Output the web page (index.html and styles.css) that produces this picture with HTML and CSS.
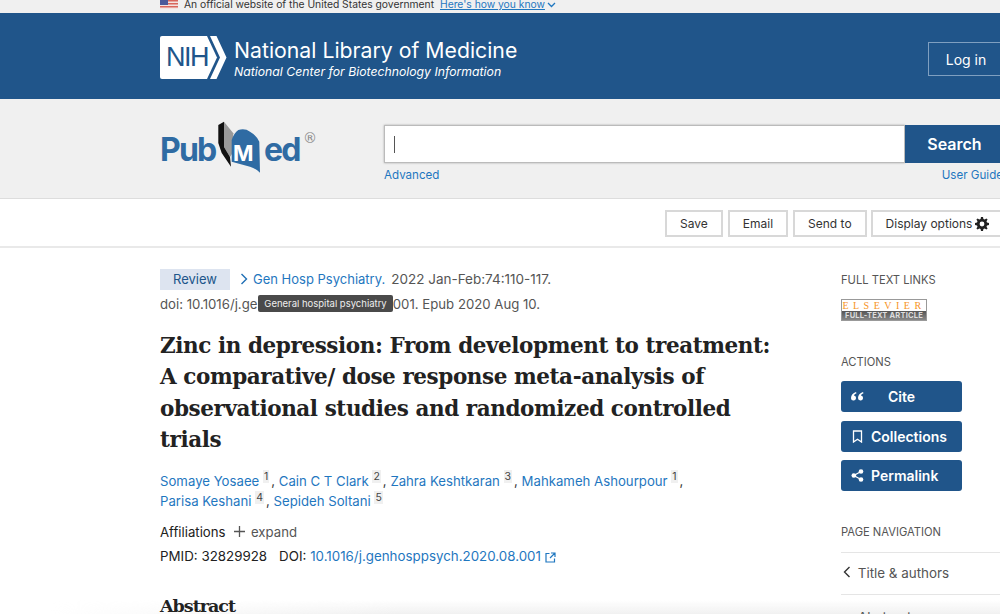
FILE: index.html
```html
<!DOCTYPE html>
<html lang="en">
<head>
    <meta charset="UTF-8">
    <title>Zinc in depression - PubMed</title>
    <link rel="stylesheet" href="styles.css">
</head>
<body>

<!-- Government banner -->
<div class="gov-banner">
    <svg class="flag" width="18" height="9" viewBox="0 0 18 9">
        <rect width="18" height="9" fill="#f3e3e0"/>
        <rect y="0" width="18" height="1.5" fill="#d8665c"/>
        <rect y="3" width="18" height="1.5" fill="#d8665c"/>
        <rect y="6" width="18" height="1.5" fill="#d8665c"/>
        <rect width="8" height="5" fill="#4a5a9a"/>
    </svg>
    <span>An official website of the United States government</span>
    <a href="#" class="how-link">Here's how you know</a>
    <svg class="how-arrow" width="9" height="6" viewBox="0 0 9 6"><path d="M1 1l3.5 3.5L8 1" fill="none" stroke="#1f77c0" stroke-width="1.3"/></svg>
</div>

<!-- NCBI header -->
<header class="ncbi-header">
    <div class="nih-logo">
        <svg width="67" height="43" viewBox="0 0 67 43">
            <path d="M2 0H47L57 21.5L47 43H2Q0 43 0 41V2Q0 0 2 0Z" fill="#fff"/>
            <path d="M50 0h6.5L66.5 21.5L56.5 43H50L60 21.5Z" fill="#fff"/>
        </svg>
        <span class="nih-mark">NIH</span>
    </div>
    <div class="nlm-text">
        <div class="nlm-name">National Library of Medicine</div>
        <div class="nlm-sub">National Center for Biotechnology Information</div>
    </div>
    <a href="#" class="login">Log in</a>
</header>

<!-- Search -->
<section class="search-bar">
    <div class="pubmed-logo">
        <span class="pub">Pub</span>
        <svg class="book" width="44" height="53" viewBox="0 0 44 53">
            <path d="M7 .7L16.3 12.3L15.7 32L13 36L7 26Z" fill="#9a9a9a"/>
            <path d="M1.3 4L7 .7V26L13 36L14 45.7L4.7 32L1.3 22Z" fill="#111"/>
            <path d="M14.7 19Q17 12 21.3 9Q28 7 33 10.7Q39 14 42.3 20.7L43 51.7Q39 47.5 33 45.7L14.7 40.7Z" fill="#2f6ba3"/>
        </svg>
        <span class="med-m">M</span>
        <span class="ed">ed</span>
        <span class="reg">®</span>
    </div>
    <div class="search-form">
        <div class="search-row">
            <div class="search-input"><span class="caret"></span></div>
            <button class="search-btn">Search</button>
        </div>
        <div class="search-links">
            <a href="#">Advanced</a>
            <a href="#">User Guide</a>
        </div>
    </div>
</section>

<!-- Toolbar -->
<nav class="toolbar">
    <button class="tool-btn">Save</button>
    <button class="tool-btn">Email</button>
    <button class="tool-btn">Send to</button>
    <button class="tool-btn display-btn">Display options
        <svg width="14" height="14" viewBox="0 0 14 14"><path d="M6 0h2l.4 2 1.3.5L11.4 1.4l1.2 1.2-1.1 1.7.5 1.3 2 .4v2l-2 .4-.5 1.3 1.1 1.7-1.2 1.2-1.7-1.1-1.3.5L8 14H6l-.4-2-1.3-.5-1.7 1.1-1.2-1.2 1.1-1.7-.5-1.3-2-.4V6l2-.4.5-1.3-1.100-1.700 1.200-1.200 1.700 1.100 1.300-.5ZM7 4.600a2.400 2.400 0 1 0 0 4.800 2.400 2.400 0 0 0 0-4.800Z" fill="#222" fill-rule="evenodd"/></svg>
    </button>
</nav>

<div class="page">
    <main class="article">
        <div class="cit-row">
            <span class="review">Review</span>
            <svg class="chevron" width="8" height="12" viewBox="0 0 8 12"><path d="M1.5 1l5 5-5 5" fill="none" stroke="#1f6fb5" stroke-width="1.4"/></svg>
            <a href="#">Gen Hosp Psychiatry.</a>
            <span>2022 Jan-Feb:74:110-117.</span>
        </div>
        <div class="doi-row">
            doi: 10.1016/j.genhosppsych.2020.08.001. Epub 2020 Aug 10.
            <span class="tooltip">General hospital psychiatry</span>
        </div>

        <h1>Zinc in depression: From development to treatment: A comparative/ dose response meta-analysis of observational studies and randomized controlled trials</h1>

        <div class="authors">
            <a href="#">Somaye Yosaee</a> <sup>1</sup>, <a href="#">Cain C T Clark</a> <sup>2</sup>, <a href="#">Zahra Keshtkaran</a> <sup>3</sup>, <a href="#">Mahkameh Ashourpour</a> <sup>1</sup>,<br>
            <a href="#">Parisa Keshani</a> <sup>4</sup>, <a href="#">Sepideh Soltani</a> <sup>5</sup>
        </div>

        <div class="affil">Affiliations
            <svg width="11" height="11" viewBox="0 0 11 11"><path d="M5.5 0v11M0 5.5h11" stroke="#555" stroke-width="1.3"/></svg>
            <span class="expand">expand</span>
        </div>
        <div class="ids">
            <span>PMID: 32829928</span>
            <span>DOI: <a href="#">10.1016/j.genhosppsych.2020.08.001</a>
                <svg class="ext-icon" width="11" height="11" viewBox="0 0 11 11"><path d="M4.5 1.5H1v8.500h8.500V6.500M6 1h4v4M10 1L5 6" fill="none" stroke="#1f77c0" stroke-width="1.2"/></svg>
            </span>
        </div>

        <h2>Abstract</h2>
    </main>

    <aside class="sidebar">
        <h3 class="side-title">FULL TEXT LINKS</h3>
        <div class="elsevier">
            <div class="els-top">ELSEVIER</div>
            <div class="els-bottom">FULL-TEXT ARTICLE</div>
        </div>

        <h3 class="side-title actions-title">ACTIONS</h3>
        <button class="action-btn">
            <svg class="act-icon" width="13" height="9" viewBox="0 0 13 9"><path d="M5 0C2 1 0 3 0 6a2.5 2.5 0 1 0 3-2.400C3.300 2.500 4 2 5.500 1.300ZM12 0C9 1 7 3 7 6a2.500 2.500 0 1 0 3-2.400c.3-1.100 1-1.600 2.500-2.300Z" fill="#fff"/></svg>
            <span class="cite-label">Cite</span>
        </button>
        <button class="action-btn">
            <svg class="act-icon" width="13" height="13" viewBox="0 0 13 13"><path d="M2.5 1h8v11l-4-2.800-4 2.800Z" fill="none" stroke="#fff" stroke-width="1.3"/></svg>
            Collections
        </button>
        <button class="action-btn">
            <svg class="act-icon" width="13" height="13" viewBox="0 0 13 13"><circle cx="2.8" cy="6.5" r="2.3" fill="#fff"/><circle cx="10" cy="2.5" r="2.3" fill="#fff"/><circle cx="10" cy="10.5" r="2.3" fill="#fff"/><path d="M2.8 6.5L10 2.5M2.8 6.5L10 10.5" stroke="#fff" stroke-width="1.3"/></svg>
            Permalink
        </button>

        <h3 class="side-title nav-title">PAGE NAVIGATION</h3>
        <div class="nav-item">
            <svg width="8" height="12" viewBox="0 0 8 12"><path d="M6.5 1l-5 5 5 5" fill="none" stroke="#333" stroke-width="1.4"/></svg>
            Title &amp; authors
        </div>
        <div class="nav-item plain">Abstract</div>
    </aside>
</div>

<div class="bottom-fade"></div>

</body>
</html>
```

FILE: styles.css
```css
html, body {
    height: 614px;
    overflow: hidden;
}
body {
    margin: 0;
    padding: 0;
    background-color: #fff;
    font-family: Inter, "Liberation Sans", sans-serif;
    color: #212121;
    font-size: 13.2px;
}
a {
    color: #1f77c0;
    text-decoration: none;
}
button {
    font-family: inherit;
}

/* Government banner */
.gov-banner {
    height: 13px;
    overflow: hidden;
    background-color: #f0f0f0;
    display: flex;
    align-items: flex-end;
    gap: 6px;
    padding-left: 160px;
    font-size: 10.3px;
    line-height: 18px;
    color: #333;
}
.flag {
    margin-bottom: 4px;
}
.how-link {
    text-decoration: underline;
}
.how-arrow {
    margin: 0 0 5px -4px;
}

/* NCBI header */
.ncbi-header {
    height: 86px;
    background-color: #20558a;
    display: flex;
    align-items: center;
    padding-left: 160px;
    color: #fff;
    overflow: hidden;
}
.nih-logo {
    position: relative;
    width: 66px;
    height: 43px;
    margin-top: 2px;
}
.nih-logo svg {
    display: block;
}
.nih-mark {
    position: absolute;
    top: 8px;
    left: 6px;
    font-family: "Liberation Sans", sans-serif;
    font-size: 27px;
    line-height: 27px;
    letter-spacing: -1.5px;
    color: #20558a;
}
.nlm-text {
    margin: 3px 0 0 8px;
}
.nlm-name {
    font-size: 21.25px;
    line-height: 27px;
    font-weight: 400;
}
.nlm-sub {
    font-size: 12.25px;
    line-height: 15px;
    font-style: italic;
}
.login {
    margin-left: auto;
    margin-right: -4px;
    margin-top: 6px;
    width: 74px;
    height: 32px;
    line-height: 34px;
    text-align: center;
    border: 1px solid #7f9fc0;
    color: #fff;
    font-size: 14px;
}

/* Search */
.search-bar {
    height: 100px;
    box-sizing: border-box;
    background-color: #f0f0f0;
    border-bottom: 1px solid #ddd;
    display: flex;
    padding-left: 160px;
}
.pubmed-logo {
    position: relative;
    width: 224px;
    flex-shrink: 0;
    color: #2f6ba3;
    font-weight: 700;
    font-size: 32px;
    letter-spacing: -1.8px;
}
.pub {
    position: absolute;
    left: 0;
    top: 32px;
    line-height: 38px;
}
.book {
    position: absolute;
    left: 57px;
    top: 22px;
}
.med-m {
    position: absolute;
    left: 73px;
    top: 41px;
    font-size: 22px;
    line-height: 26px;
    letter-spacing: 0;
    color: #fff;
}
.ed {
    position: absolute;
    left: 104px;
    top: 32px;
    line-height: 38px;
}
.reg {
    position: absolute;
    left: 143px;
    top: 30px;
    font-family: "DejaVu Sans", sans-serif;
    font-size: 14px;
    line-height: 18px;
    font-weight: 400;
    letter-spacing: 0;
    color: #8a8a8a;
}
.search-form {
    padding-top: 26px;
    flex-shrink: 0;
}
.search-row {
    display: flex;
    height: 38px;
}
.search-input {
    width: 521px;
    flex-shrink: 0;
    box-sizing: border-box;
    background: #fff;
    border: 1px solid #bbb;
    box-shadow: 0 0 2px rgba(0, 0, 0, 0.3);
    padding: 10px 9px;
}
.caret {
    display: block;
    width: 1px;
    height: 17px;
    background: #555;
}
.search-btn {
    width: 99px;
    flex-shrink: 0;
    border: none;
    background-color: #20558a;
    color: #fff;
    font-size: 16px;
    font-weight: 600;
    padding: 0 0 1px;
}
.search-links {
    display: flex;
    justify-content: space-between;
    width: 619px;
    font-size: 11.6px;
    line-height: 16px;
    margin-top: 4px;
}

/* Toolbar */
.toolbar {
    height: 49px;
    box-sizing: border-box;
    border-bottom: 2px solid #e9e9e9;
    display: flex;
    align-items: center;
    gap: 5px;
    padding: 2px 0 0 665px;
}
.tool-btn {
    height: 27px;
    padding: 0 13px;
    background: #fff;
    border: 2px solid #d8d8d8;
    color: #333;
    font-size: 12px;
    flex-shrink: 0;
}
.display-btn {
    display: flex;
    align-items: center;
    gap: 3px;
    margin-left: -1px;
    padding: 0 14px 0 13px;
}

/* Main layout */
.page {
    display: flex;
    padding-left: 160px;
    position: relative;
    z-index: 1;
}
.article {
    width: 620px;
    padding-top: 20px;
    flex-shrink: 0;
}
.cit-row {
    display: flex;
    align-items: center;
    height: 22px;
    color: #555;
    font-size: 13.5px;
}
.review {
    width: 70px;
    height: 21px;
    line-height: 21px;
    text-align: center;
    background-color: #dde4f0;
    color: #20558a;
    font-size: 13px;
    margin-right: 10px;
}
.chevron {
    margin-right: 5px;
}
.cit-row a {
    font-size: 13px;
    margin-right: 6px;
}
.doi-row {
    position: relative;
    margin-top: 3px;
    line-height: 22px;
    color: #555;
}
.tooltip {
    position: absolute;
    left: 98px;
    top: 2px;
    height: 17px;
    line-height: 17px;
    width: 135px;
    text-align: center;
    background: #4a4a4a;
    color: #eee;
    font-size: 9.5px;
    border-radius: 2px;
}
h1 {
    margin: 15px 0 0;
    font-family: "DejaVu Serif", serif;
    font-size: 21.5px;
    line-height: 31.4px;
    font-weight: 700;
    letter-spacing: -0.42px;
    color: #222;
}
.authors {
    margin-top: 15px;
    line-height: 20.5px;
    color: #333;
}
.authors sup {
    font-size: 10.5px;
    color: #444;
    line-height: 0;
    padding: 0 1px;
    margin-right: 2px;
    background: #f0f0f0;
}
.affil {
    margin-top: 9px;
    line-height: 22px;
}
.affil svg {
    margin: 0 2px 0 5px;
}
.expand {
    color: #555;
}
.ids {
    display: flex;
    gap: 12px;
    line-height: 22px;
    margin-top: 2px;
    font-size: 13.35px;
}
.ext-icon {
    vertical-align: -2px;
}
h2 {
    margin: 27px 0 0;
    font-family: "DejaVu Serif", serif;
    font-size: 17.5px;
    letter-spacing: -1px;
    line-height: 24px;
    color: #222;
}

/* Sidebar */
.sidebar {
    margin-left: 61px;
    width: 159px;
    flex-shrink: 0;
    padding-top: 25px;
}
.side-title {
    margin: 0;
    font-size: 11.2px;
    line-height: 14px;
    font-weight: 400;
    color: #555;
}
.elsevier {
    margin-top: 12px;
    width: 86px;
    height: 22px;
    border: 1px solid #999;
    box-sizing: border-box;
    text-align: center;
    overflow: hidden;
}
.els-top {
    height: 11px;
    line-height: 11px;
    background: #fff;
    color: #f7941e;
    font-family: "Liberation Serif", serif;
    font-size: 10px;
    letter-spacing: 4.5px;
    white-space: nowrap;
}
.els-bottom {
    height: 9px;
    line-height: 9px;
    background: linear-gradient(#555, #888);
    color: #ddd;
    font-size: 7.5px;
    letter-spacing: 0.2px;
    font-weight: 700;
    white-space: nowrap;
}
.actions-title {
    margin-top: 34px;
}
.action-btn {
    display: flex;
    align-items: center;
    width: 121px;
    height: 31px;
    margin-top: 8.5px;
    padding: 0 0 0 10px;
    border: none;
    border-radius: 3px;
    background-color: #20558a;
    color: #fff;
    font-size: 14px;
    font-weight: 600;
}
.actions-title + .action-btn {
    margin-top: 12px;
}
.act-icon {
    margin-right: 7px;
    flex-shrink: 0;
}
.cite-label {
    margin-left: 17px;
}
.nav-title {
    margin-top: 34px;
}
.nav-item {
    margin-top: 13px;
    border-top: 1px solid #e5e5e5;
    padding-top: 12px;
    height: 29px;
    color: #555;
    font-size: 13.4px;
}
.nav-item svg {
    margin: 0 3px 0 2px;
}
.nav-item.plain {
    margin-top: 0;
    padding-top: 14px;
    padding-left: 17px;
}

/* Soft shadow along the bottom of the window */
.bottom-fade {
    position: absolute;
    left: 0;
    right: 0;
    top: 600px;
    height: 14px;
    background: linear-gradient(to bottom, rgba(235, 235, 235, 0), rgba(235, 235, 235, 0.7));
    -webkit-mask-image: linear-gradient(to right, transparent 5%, #000 40%);
    mask-image: linear-gradient(to right, transparent 5%, #000 40%);
}
```
